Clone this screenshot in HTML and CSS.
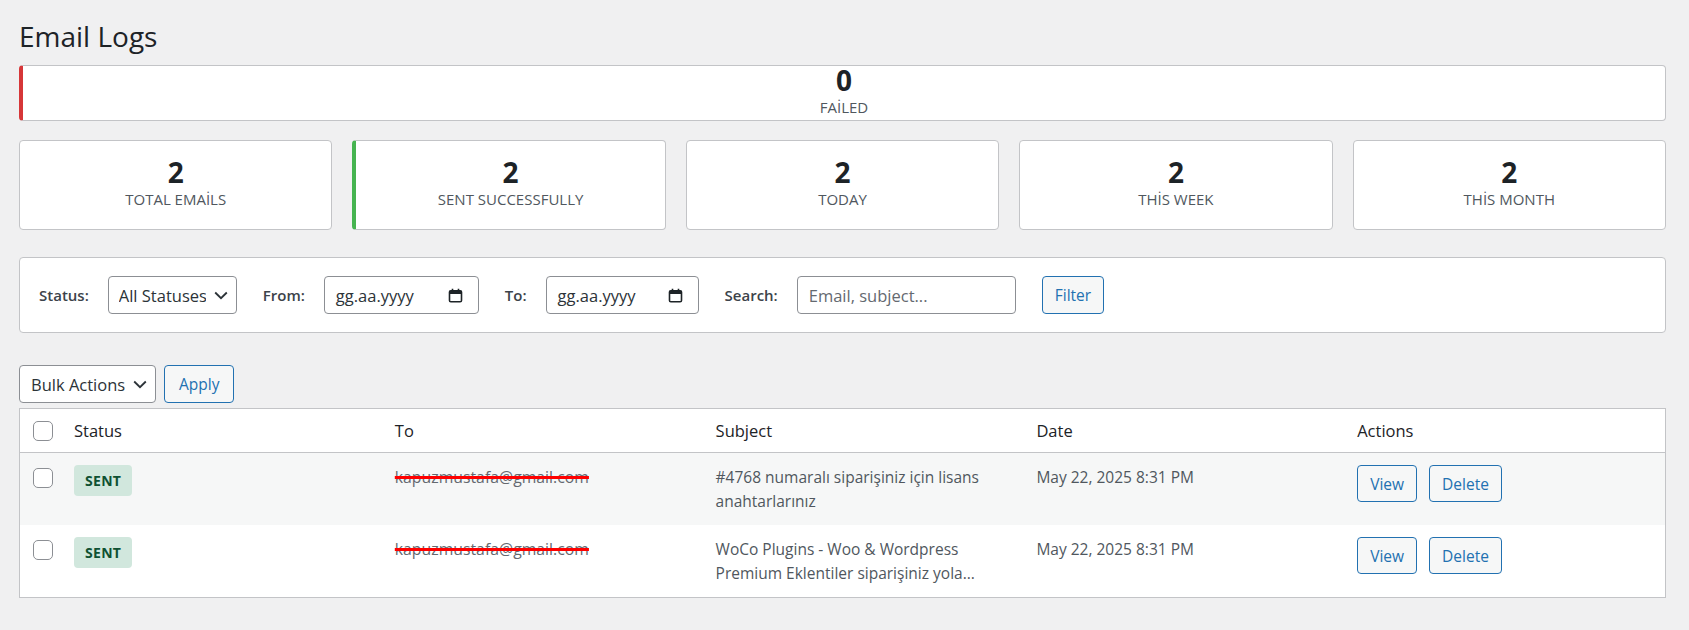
FILE: index.html
```html
<!DOCTYPE html>
<html lang="tr">
<head>
<meta charset="utf-8">
<title>Email Logs</title>
<link rel="stylesheet" href="styles.css">
</head>
<body>
<div class="wrap">
  <h1 class="page-title">Email Logs</h1>

  <div class="stat-card stat-failed">
    <div class="stat-number">0</div>
    <div class="stat-label">FAİLED</div>
  </div>

  <div class="stat-grid">
    <div class="stat-card">
      <div class="stat-number">2</div>
      <div class="stat-label">TOTAL EMAİLS</div>
    </div>
    <div class="stat-card stat-sent">
      <div class="stat-number">2</div>
      <div class="stat-label">SENT SUCCESSFULLY</div>
    </div>
    <div class="stat-card">
      <div class="stat-number">2</div>
      <div class="stat-label">TODAY</div>
    </div>
    <div class="stat-card">
      <div class="stat-number">2</div>
      <div class="stat-label">THİS WEEK</div>
    </div>
    <div class="stat-card">
      <div class="stat-number">2</div>
      <div class="stat-label">THİS MONTH</div>
    </div>
  </div>

  <form class="filters">
    <div class="filter-group">
      <label class="filter-label">Status:</label>
      <span class="select-wrap select-status">
        <select class="select"><option>All Statuses</option></select>
        <svg class="chevron" width="14" height="9" viewBox="0 0 14 9"><path d="M1.2 1.5 L7 7.2 L12.8 1.5" fill="none" stroke="#2c3338" stroke-width="1.8"/></svg>
      </span>
    </div>
    <div class="filter-group">
      <label class="filter-label">From:</label>
      <span class="date-input date-from">
        <span class="date-text">gg.aa.yyyy</span>
        <svg class="cal" width="15" height="15" viewBox="0 0 15 15"><rect x="1.5" y="2.8" width="12" height="11" rx="1.3" fill="none" stroke="#1d2327" stroke-width="1.6"/><rect x="1.5" y="2.8" width="12" height="3.2" fill="#1d2327"/><path d="M4.5 0.8 V3.5 M10.5 0.8 V3.5" stroke="#1d2327" stroke-width="1.6"/></svg>
      </span>
    </div>
    <div class="filter-group">
      <label class="filter-label">To:</label>
      <span class="date-input date-to">
        <span class="date-text">gg.aa.yyyy</span>
        <svg class="cal" width="15" height="15" viewBox="0 0 15 15"><rect x="1.5" y="2.8" width="12" height="11" rx="1.3" fill="none" stroke="#1d2327" stroke-width="1.6"/><rect x="1.5" y="2.8" width="12" height="3.2" fill="#1d2327"/><path d="M4.5 0.8 V3.5 M10.5 0.8 V3.5" stroke="#1d2327" stroke-width="1.6"/></svg>
      </span>
    </div>
    <div class="filter-group">
      <label class="filter-label">Search:</label>
      <input class="text-input" type="text" placeholder="Email, subject...">
    </div>
    <button type="button" class="button">Filter</button>
  </form>

  <div class="tablenav">
    <span class="select-wrap select-bulk">
      <select class="select"><option>Bulk Actions</option></select>
      <svg class="chevron" width="14" height="9" viewBox="0 0 14 9"><path d="M1.2 1.5 L7 7.2 L12.8 1.5" fill="none" stroke="#2c3338" stroke-width="1.8"/></svg>
    </span>
    <button type="button" class="button button-apply">Apply</button>
  </div>

  <table class="logs">
    <colgroup>
      <col class="col-check">
      <col><col><col><col><col>
    </colgroup>
    <thead>
      <tr>
        <th class="check-col"><span class="checkbox"></span></th>
        <th>Status</th>
        <th>To</th>
        <th>Subject</th>
        <th>Date</th>
        <th>Actions</th>
      </tr>
    </thead>
    <tbody>
      <tr>
        <td class="check-col"><span class="checkbox"></span></td>
        <td><span class="badge">SENT</span></td>
        <td><span class="redacted">kapuzmustafa@gmail.com</span></td>
        <td>#4768 numaralı siparişiniz için lisans anahtarlarınız</td>
        <td>May 22, 2025 8:31 PM</td>
        <td><div class="actions"><button type="button" class="button button-sm">View</button><button type="button" class="button button-sm">Delete</button></div></td>
      </tr>
      <tr>
        <td class="check-col"><span class="checkbox"></span></td>
        <td><span class="badge">SENT</span></td>
        <td><span class="redacted">kapuzmustafa@gmail.com</span></td>
        <td>WoCo Plugins - Woo &amp; Wordpress Premium Eklentiler siparişiniz yola...</td>
        <td>May 22, 2025 8:31 PM</td>
        <td><div class="actions"><button type="button" class="button button-sm">View</button><button type="button" class="button button-sm">Delete</button></div></td>
      </tr>
    </tbody>
  </table>
</div>
</body>
</html>
```

FILE: styles.css
```css
* { box-sizing: border-box; }

body {
  margin: 0;
  background: #f0f0f1;
  font-family: "Open Sans", "Noto Sans", "DejaVu Sans", sans-serif;
  font-size: 15.5px;
  color: #3c434a;
}

.wrap {
  padding: 18px 23px 0 19px;
}

.page-title {
  margin: 0 0 11px;
  font-size: 28px;
  font-weight: 400;
  line-height: 36px;
  color: #1d2327;
}

.stat-card {
  background: #fff;
  border: 1px solid #c3c4c7;
  border-radius: 4px;
  padding: 17px 20px;
  text-align: center;
}

.stat-failed {
  border-left: 4px solid #d63638;
  padding: 0 20px;
}

.stat-sent {
  border-left: 4px solid #46b450;
}

.stat-number {
  font-size: 28px;
  font-weight: 700;
  line-height: 28px;
  color: #1d2327;
}

.stat-label {
  font-size: 15px;
  line-height: 26px;
  color: #50575e;
}

.stat-grid {
  display: grid;
  grid-template-columns: repeat(5, 1fr);
  gap: 20px;
  margin: 19px 0 27px;
}

.filters {
  display: flex;
  align-items: center;
  gap: 26px;
  margin: 0;
  padding: 18px 19px;
  background: #fff;
  border: 1px solid #c3c4c7;
  border-radius: 4px;
}

.filter-group {
  display: flex;
  align-items: center;
  gap: 19px;
}

.filter-label {
  font-size: 15px;
  font-weight: 600;
  color: #3c434a;
}

.select-wrap {
  position: relative;
  display: inline-flex;
}

.select {
  appearance: none;
  -webkit-appearance: none;
  height: 38px;
  margin: 0;
  padding: 0 30px 0 10px;
  background: #fff;
  border: 1px solid #8c8f94;
  border-radius: 4px;
  font-family: "Open Sans", "Noto Sans", sans-serif;
  font-size: 16.5px;
  color: #2c3338;
}

.select-status .select { width: 129px; }
.select-bulk .select { width: 137px; padding-left: 11px; }

.chevron {
  position: absolute;
  right: 9px;
  top: 15px;
  pointer-events: none;
}

.date-input {
  display: inline-flex;
  align-items: center;
  justify-content: space-between;
  height: 38px;
  padding: 0 15px 0 11px;
  background: #fff;
  border: 1px solid #8c8f94;
  border-radius: 4px;
  font-size: 16.5px;
  color: #2c3338;
}

.date-from { width: 155px; }
.date-to { width: 153px; }

.cal { display: block; }

.text-input {
  width: 219px;
  height: 38px;
  margin: 0;
  padding: 0 11px;
  background: #fff;
  border: 1px solid #8c8f94;
  border-radius: 4px;
  font-family: "Open Sans", "Noto Sans", sans-serif;
  font-size: 16.5px;
  color: #2c3338;
}

.text-input::placeholder { color: #646970; }

.button {
  height: 38px;
  margin: 0;
  padding: 0 12px;
  background: #f6f7f7;
  border: 1px solid #2271b1;
  border-radius: 4px;
  font-family: "Open Sans", "Noto Sans", sans-serif;
  font-size: 15.5px;
  color: #2271b1;
}

.button-apply { padding: 0 14px; }

.button-sm { height: 37px; }

.tablenav {
  display: flex;
  align-items: center;
  gap: 8px;
  margin: 32px 0 5px;
}

.logs {
  width: 100%;
  table-layout: fixed;
  border-collapse: separate;
  border-spacing: 0;
  background: #fff;
  border: 1px solid #c3c4c7;
}

.col-check { width: 41px; }

.logs th {
  padding: 10px 13px 9px;
  font-size: 16.5px;
  font-weight: 400;
  line-height: 24px;
  text-align: left;
  color: #1d2327;
  border-bottom: 1px solid #c3c4c7;
}

.logs td {
  padding: 12px 13px;
  line-height: 24px;
  vertical-align: top;
  color: #50575e;
}

.logs tbody tr:nth-child(odd) { background: #f6f7f7; }

.logs th.check-col { padding: 12px 0 11px 13px; }
.logs td.check-col { padding: 15px 0 0 13px; }

.checkbox {
  display: block;
  width: 20px;
  height: 20px;
  background: #fff;
  border: 1px solid #8c8f94;
  border-radius: 5px;
}

.badge {
  display: block;
  width: fit-content;
  padding: 0 11px;
  line-height: 31px;
  background: #d1e7dd;
  color: #0f5132;
  font-size: 14px;
  font-weight: 700;
  letter-spacing: 0.3px;
  border-radius: 4px;
}

.redacted {
  color: #646970;
  font-size: 15.8px;
  text-decoration: line-through;
  text-decoration-color: #ff0000;
  text-decoration-thickness: 3px;
}

.actions {
  display: flex;
  gap: 12px;
}
```
